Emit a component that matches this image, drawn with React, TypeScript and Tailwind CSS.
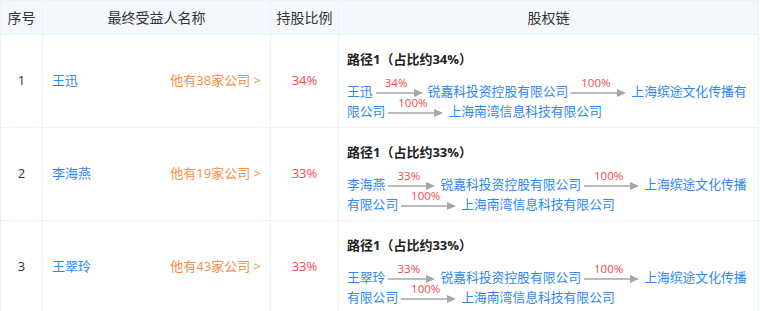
import React from 'react';

type Hop = { pct: string; to: string; w: number };
type Row = { no: number; name: string; count: number; pct: string; hops: Hop[] };

const rows: Row[] = [
  {
    no: 1,
    name: '王迅',
    count: 38,
    pct: '34%',
    hops: [
      { pct: '34%', to: '锐嘉科投资控股有限公司', w: 47 },
      { pct: '100%', to: '上海缤途文化传播有限公司', w: 55 },
      { pct: '100%', to: '上海南湾信息科技有限公司', w: 55 },
    ],
  },
  {
    no: 2,
    name: '李海燕',
    count: 19,
    pct: '33%',
    hops: [
      { pct: '33%', to: '锐嘉科投资控股有限公司', w: 47 },
      { pct: '100%', to: '上海缤途文化传播有限公司', w: 55 },
      { pct: '100%', to: '上海南湾信息科技有限公司', w: 55 },
    ],
  },
  {
    no: 3,
    name: '王翠玲',
    count: 43,
    pct: '33%',
    hops: [
      { pct: '33%', to: '锐嘉科投资控股有限公司', w: 47 },
      { pct: '100%', to: '上海缤途文化传播有限公司', w: 55 },
      { pct: '100%', to: '上海南湾信息科技有限公司', w: 55 },
    ],
  },
];

function Arrow({ pct, w }: { pct: string; w: number }) {
  return (
    <span className="relative inline-block align-middle ml-[3px] mr-[5px]" style={{ width: w }}>
      <span className="absolute bottom-[9px] left-0 right-[6px] text-center text-[11.5px] leading-[11px] text-[#f5484f]">
        {pct}
      </span>
      <svg width={w} height="8" viewBox={`0 0 ${w} 8`} className="block">
        <line x1="0" y1="4" x2={w - 8} y2="4" stroke="#a6a6a6" strokeWidth="1.5" />
        <polygon points={`${w - 9},0 ${w},4 ${w - 9},8`} fill="#a6a6a6" />
      </svg>
    </span>
  );
}

export default function App() {
  return (
    <div
      className="w-[760px] h-[311px] bg-white overflow-hidden text-[#333]"
      style={{ fontFamily: '"Open Sans", "Noto Sans CJK SC", sans-serif' }}
    >
      <table className="w-[759px] border-collapse table-fixed">
        <colgroup>
          <col className="w-[42px]" />
          <col className="w-[228px]" />
          <col className="w-[68px]" />
          <col />
        </colgroup>
        <thead>
          <tr className="h-[34px] bg-[#f3f8fd] text-[14px]">
            <th className="font-normal border border-[#ebf2fb]">序号</th>
            <th className="font-normal border border-[#ebf2fb]">最终受益人名称</th>
            <th className="font-normal border border-[#ebf2fb]">持股比例</th>
            <th className="font-normal border border-[#ebf2fb]">股权链</th>
          </tr>
        </thead>
        <tbody className="text-[13px]">
          {rows.map((r) => (
            <tr key={r.no} className="h-[92px]">
              <td className="text-center border border-[#ebf2fb]">{r.no}</td>
              <td className="border border-[#ebf2fb] px-[9px]">
                <div className="flex items-center justify-between">
                  <span className="text-[#2f86f4]">{r.name}</span>
                  <span className="text-[#fa8c45]">他有{r.count}家公司 &gt;</span>
                </div>
              </td>
              <td className="text-center border border-[#ebf2fb] text-[#f5484f]">{r.pct}</td>
              <td className="border border-[#ebf2fb] pl-[8px] pr-[6px] pt-[14px] pb-[6px] align-top">
                <div className="font-bold leading-[20px] text-[#222]">路径1（占比约{r.pct}）</div>
                <div className="mt-[12px] leading-[20px] text-[12.8px] text-[#2f86f4]">
                  {r.name}
                  {r.hops.map((h, i) => (
                    <React.Fragment key={i}>
                      <Arrow pct={h.pct} w={h.w} />
                      {h.to}
                    </React.Fragment>
                  ))}
                </div>
              </td>
            </tr>
          ))}
        </tbody>
      </table>
    </div>
  );
}
